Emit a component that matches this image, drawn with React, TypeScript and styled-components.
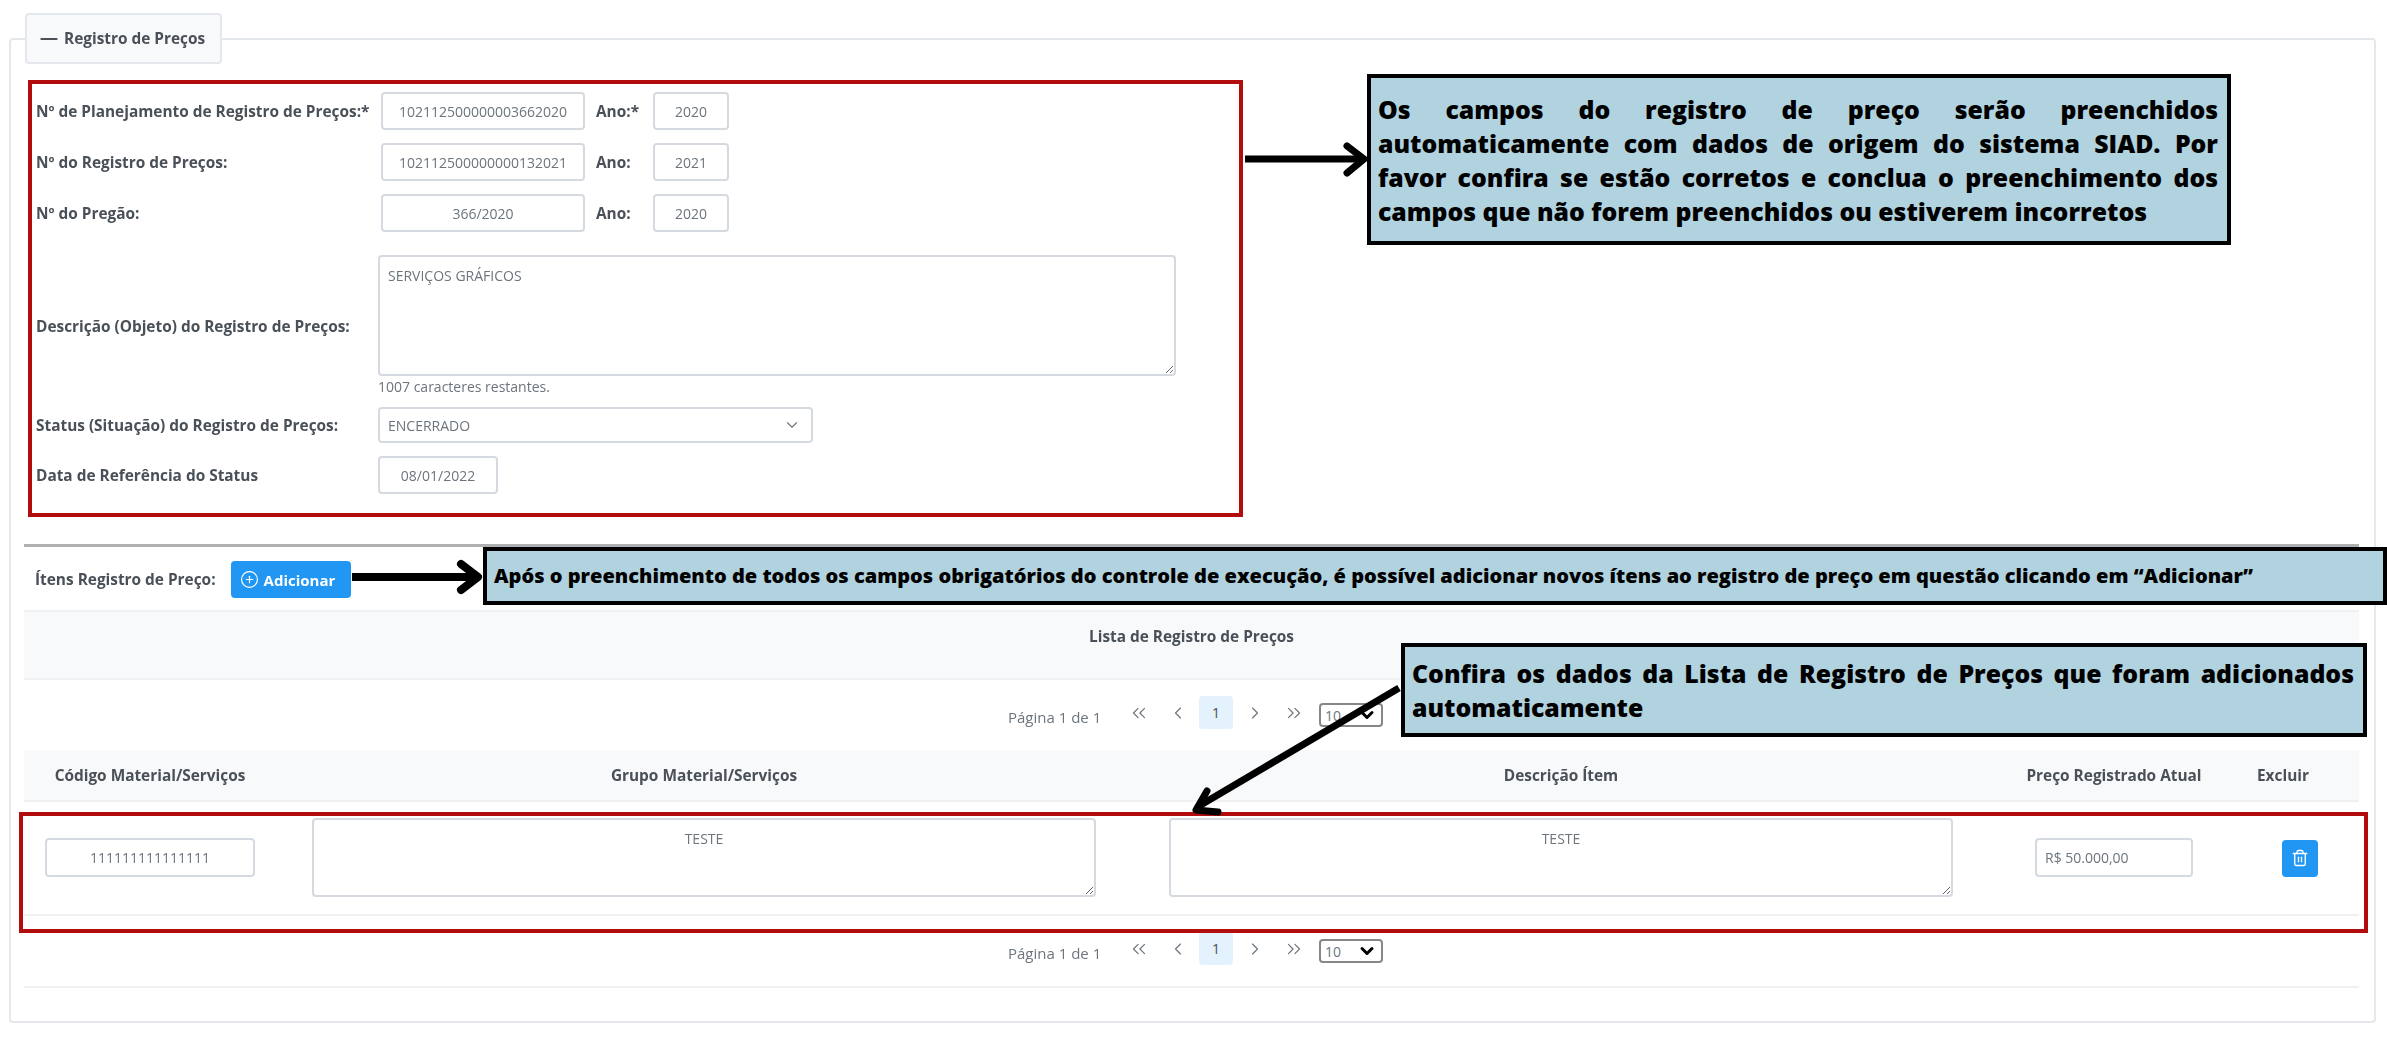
import { ChevronDown, ChevronLeft, ChevronRight, ChevronsLeft, ChevronsRight, CirclePlus, Minus, Trash2 } from "lucide-react";
import styled, { createGlobalStyle } from "styled-components";

const GlobalStyle = createGlobalStyle`
  html, body {
    margin: 0;
    padding: 0;
    background: #fff;
    overflow: hidden;
  }

  * {
    box-sizing: border-box;
  }
`;

function Paginator({ $bottom }: { $bottom?: boolean }) {
  return (
    <PaginatorBar $bottom={$bottom}>
      <PageReport>Página 1 de 1</PageReport>
      <PageIcon>
        <ChevronsLeft size={22} strokeWidth={1.3} />
      </PageIcon>
      <PageIcon>
        <ChevronLeft size={20} strokeWidth={1.4} />
      </PageIcon>
      <PageCurrent>1</PageCurrent>
      <PageIcon>
        <ChevronRight size={20} strokeWidth={1.4} />
      </PageIcon>
      <PageIcon>
        <ChevronsRight size={22} strokeWidth={1.3} />
      </PageIcon>
      <PageSize>
        10
        <ChevronDown size={20} strokeWidth={3.6} />
      </PageSize>
    </PaginatorBar>
  );
}

export default function App() {
  return (
    <Page>
      <GlobalStyle />
      <Panel>
        <Legend>
          <Minus size={26} strokeWidth={2} />
          Registro de Preços
        </Legend>

        <Form>
          <NumberRow>
            <NumberLabel>Nº de Planejamento de Registro de Preços:*</NumberLabel>
            <NumberInput readOnly defaultValue="102112500000003662020" />
            <YearLabel>Ano:*</YearLabel>
            <YearInput readOnly defaultValue="2020" />
          </NumberRow>
          <NumberRow>
            <NumberLabel>Nº do Registro de Preços:</NumberLabel>
            <NumberInput readOnly defaultValue="102112500000000132021" />
            <YearLabel>Ano:</YearLabel>
            <YearInput readOnly defaultValue="2021" />
          </NumberRow>
          <NumberRow>
            <NumberLabel>Nº do Pregão:</NumberLabel>
            <NumberInput readOnly defaultValue="366/2020" />
            <YearLabel>Ano:</YearLabel>
            <YearInput readOnly defaultValue="2020" />
          </NumberRow>

          <DescriptionRow>
            <FieldLabel>Descrição (Objeto) do Registro de Preços:</FieldLabel>
            <DescriptionField>
              <DescriptionArea readOnly defaultValue="SERVIÇOS GRÁFICOS" />
              <Remaining>1007 caracteres restantes.</Remaining>
            </DescriptionField>
          </DescriptionRow>

          <StatusRow>
            <FieldLabel>Status (Situação) do Registro de Preços:</FieldLabel>
            <Dropdown>
              ENCERRADO
              <ChevronDown size={18} strokeWidth={1.5} />
            </Dropdown>
          </StatusRow>

          <DateRow>
            <FieldLabel>Data de Referência do Status</FieldLabel>
            <DateInput readOnly defaultValue="08/01/2022" />
          </DateRow>
        </Form>

        <Divider />

        <ItemsToolbar>
          <ItemsLabel>Ítens Registro de Preço:</ItemsLabel>
          <AddButton>
            <CirclePlus size={19} strokeWidth={1.5} />
            Adicionar
          </AddButton>
        </ItemsToolbar>

        <ListTitle>Lista de Registro de Preços</ListTitle>
        <Paginator />

        <ColumnsHeader>
          <HeaderCell>Código Material/Serviços</HeaderCell>
          <HeaderCell>Grupo Material/Serviços</HeaderCell>
          <HeaderCell>Descrição Ítem</HeaderCell>
          <HeaderCell>Preço Registrado Atual</HeaderCell>
          <DeleteHeaderCell>Excluir</DeleteHeaderCell>
        </ColumnsHeader>

        <ItemRow>
          <CodeInput readOnly defaultValue="111111111111111" />
          <ItemArea readOnly defaultValue="TESTE" />
          <ItemArea readOnly defaultValue="TESTE" />
          <PriceInput readOnly defaultValue="R$ 50.000,00" />
          <DeleteButton>
            <Trash2 size={18} strokeWidth={1.8} />
          </DeleteButton>
        </ItemRow>

        <Paginator $bottom />
      </Panel>

      <Highlight $x={28} $y={80} $w={1215} $h={437} />
      <Highlight $x={19} $y={812} $w={2349} $h={121} />

      <Arrows viewBox="0 0 2387 1037">
        <path d="M1245 159H1360" strokeWidth="7" />
        <path d="M1347 146L1364 159L1347 173" strokeWidth="7" strokeLinecap="round" strokeLinejoin="round" />
        <path d="M352 577H476" strokeWidth="8" />
        <path d="M461 564L478 577L461 590" strokeWidth="8" strokeLinecap="round" strokeLinejoin="round" />
        <path d="M1399 688L1199 806" strokeWidth="7" />
        <path d="M1207 791L1196 810L1218 812" strokeWidth="7" strokeLinecap="round" strokeLinejoin="round" />
      </Arrows>

      <Callout $x={1367} $y={74} $w={864} $h={171} $size={24.8}>
        <span>
          Os campos do registro de preço serão preenchidos automaticamente com dados de origem do sistema SIAD. Por favor
          confira se estão corretos e conclua o preenchimento dos campos que não forem preenchidos ou estiverem incorretos
        </span>
      </Callout>
      <Callout $x={483} $y={547} $w={1904} $h={58} $size={20.05}>
        <span>
          Após o preenchimento de todos os campos obrigatórios do controle de execução, é possível adicionar novos ítens
          ao registro de preço em questão clicando em “Adicionar”
        </span>
      </Callout>
      <Callout $x={1401} $y={643} $w={966} $h={94} $size={24.8}>
        <span>Confira os dados da Lista de Registro de Preços que foram adicionados automaticamente</span>
      </Callout>
    </Page>
  );
}

const Page = styled.div`
  position: relative;
  width: 2387px;
  height: 1037px;
  overflow: hidden;
  padding: 38px 11px 8px 9px;
  background: #fff;
  font-family: "Open Sans", "Liberation Sans", sans-serif;
  color: #495057;
`;

const Panel = styled.section`
  height: 985px;
  padding: 0 15px 0 13px;
  border: 2px solid #e4e8ec;
  border-radius: 4px;
  filter: blur(0.45px);
`;

const Legend = styled.div`
  display: flex;
  align-items: center;
  gap: 2px;
  width: 197px;
  height: 51px;
  margin: -27px 0 0 1px;
  padding-left: 9px;
  background: #f8f9fa;
  border: 2px solid #e4e8ec;
  border-radius: 4px;
  font-size: 15.4px;
  font-weight: 700;
`;

const Form = styled.div`
  display: flex;
  flex-direction: column;
  margin-top: 28px;
  padding-left: 12px;
`;

const NumberRow = styled.div`
  display: flex;
  align-items: center;
  height: 38px;
  margin-bottom: 13px;
`;

const FieldLabel = styled.label`
  width: 342px;
  flex-shrink: 0;
  font-size: 15.4px;
  font-weight: 700;
`;

const NumberLabel = styled(FieldLabel)`
  width: 345px;
`;

const YearLabel = styled(FieldLabel)`
  width: 57px;
  margin-left: 11px;
`;

const TextInput = styled.input`
  height: 38px;
  padding: 0 8px;
  background: #fff;
  border: 2px solid #d5dae0;
  border-radius: 4px;
  outline: none;
  font-family: inherit;
  font-size: 14px;
  color: #6c757d;
  text-align: center;
`;

const NumberInput = styled(TextInput)`
  width: 204px;
`;

const YearInput = styled(TextInput)`
  width: 76px;
`;

const DescriptionRow = styled.div`
  display: flex;
  align-items: center;
  margin-top: 10px;
`;

const DescriptionField = styled.div`
  display: flex;
  flex-direction: column;
`;

const TextArea = styled.textarea`
  display: block;
  resize: both;
  padding: 9px 8px;
  background: #fff;
  border: 2px solid #d5dae0;
  border-radius: 4px;
  outline: none;
  font-family: inherit;
  font-size: 14px;
  color: #6c757d;
`;

const DescriptionArea = styled(TextArea)`
  width: 798px;
  height: 121px;
`;

const Remaining = styled.small`
  height: 20px;
  margin-top: 1px;
  font-size: 14px;
  line-height: 20px;
  color: #6c757d;
`;

const StatusRow = styled.div`
  display: flex;
  align-items: center;
  margin-top: 10px;
`;

const Dropdown = styled.div`
  display: flex;
  align-items: center;
  justify-content: space-between;
  width: 435px;
  height: 36px;
  padding: 0 10px 0 8px;
  border: 2px solid #d5dae0;
  border-radius: 4px;
  font-size: 14px;
  color: #6c757d;
`;

const DateRow = styled.div`
  display: flex;
  align-items: center;
  margin-top: 13px;
`;

const DateInput = styled(TextInput)`
  width: 120px;
`;

const Divider = styled.hr`
  height: 3px;
  margin: 50px 0 0;
  background: #aeb0b2;
  border: none;
`;

const ItemsToolbar = styled.div`
  display: flex;
  align-items: center;
  gap: 15px;
  height: 37px;
  margin-top: 14px;
  padding-left: 11px;
`;

const ItemsLabel = styled.span`
  font-size: 15.4px;
  font-weight: 700;
`;

const AddButton = styled.button`
  display: flex;
  align-items: center;
  gap: 5px;
  width: 120px;
  height: 37px;
  padding: 0 0 0 9px;
  background: #2196f3;
  border: none;
  border-radius: 4px;
  color: #fff;
  font-family: inherit;
  font-size: 15px;
  font-weight: 700;
`;

const ListTitle = styled.div`
  height: 70px;
  margin-top: 12px;
  padding-top: 14px;
  background: #f8f9fa;
  border-top: 2px solid #eef0f2;
  border-bottom: 2px solid #eef0f2;
  font-size: 15.4px;
  font-weight: 700;
  text-align: center;
`;

const PaginatorBar = styled.div<{ $bottom?: boolean }>`
  display: flex;
  align-items: center;
  justify-content: center;
  height: ${(p) => (p.$bottom ? "72px" : "70px")};
  padding-left: 8px;
  border-bottom: ${(p) => (p.$bottom ? "2px solid #eef0f2" : "none")};
`;

const PageReport = styled.span`
  width: 111px;
  padding-top: 3px;
  font-size: 15px;
  color: #6c757d;
`;

const PageIcon = styled.span`
  display: flex;
  align-items: center;
  justify-content: center;
  width: 39px;
  margin-bottom: 4px;
  color: #6c757d;
`;

const PageCurrent = styled.span`
  display: flex;
  align-items: center;
  justify-content: center;
  width: 34px;
  height: 33px;
  margin: 0 2px 5px;
  background: #e3f2fd;
  border-radius: 4px;
  font-size: 14px;
  color: #495057;
`;

const PageSize = styled.div`
  display: flex;
  align-items: center;
  justify-content: space-between;
  width: 64px;
  height: 24px;
  margin-left: 6px;
  padding: 0 4px;
  background: #fff;
  border: 2px solid #85888b;
  border-radius: 4px;
  font-size: 14px;
  color: #6c757d;

  svg {
    color: #000;
  }
`;

const ColumnsHeader = styled.div`
  display: grid;
  grid-template-columns: 252px 856px 858px 248px 121px;
  align-items: center;
  height: 52px;
  background: #f8f9fa;
  border-bottom: 2px solid #eef0f2;
`;

const HeaderCell = styled.div`
  font-size: 15.4px;
  font-weight: 700;
  text-align: center;
`;

const DeleteHeaderCell = styled(HeaderCell)`
  padding-left: 19px;
  text-align: left;
`;

const ItemRow = styled.div`
  display: grid;
  grid-template-columns: 252px 856px 858px 248px 121px;
  align-items: center;
  justify-items: center;
  padding: 16px 0 17px;
  border-bottom: 2px solid #eef0f2;
`;

const CodeInput = styled(TextInput)`
  width: 210px;
  height: 39px;
`;

const ItemArea = styled(TextArea)`
  width: 784px;
  height: 79px;
  text-align: center;
`;

const PriceInput = styled(TextInput)`
  width: 158px;
  height: 39px;
  text-align: left;
`;

const DeleteButton = styled.button`
  display: flex;
  align-items: center;
  justify-content: center;
  width: 36px;
  height: 37px;
  margin: 1px 0 0 3px;
  padding: 0;
  background: #2196f3;
  border: none;
  border-radius: 4px;
  color: #fff;
`;

const Highlight = styled.div<{ $x: number; $y: number; $w: number; $h: number }>`
  position: absolute;
  left: ${(p) => p.$x}px;
  top: ${(p) => p.$y}px;
  width: ${(p) => p.$w}px;
  height: ${(p) => p.$h}px;
  border: 4px solid #b30c0c;
`;

const Arrows = styled.svg`
  position: absolute;
  inset: 0;
  width: 2387px;
  height: 1037px;
  pointer-events: none;
  fill: none;
  stroke: #000;
`;

const Callout = styled.div<{ $x: number; $y: number; $w: number; $h: number; $size: number }>`
  position: absolute;
  left: ${(p) => p.$x}px;
  top: ${(p) => p.$y}px;
  display: flex;
  align-items: center;
  width: ${(p) => p.$w}px;
  height: ${(p) => p.$h}px;
  padding: 0 9px 0 7px;
  background: #b1d2df;
  border: 4px solid #000;
  color: #000;
  font-size: ${(p) => p.$size}px;
  font-weight: 800;
  line-height: 34px;
  text-align: justify;
`;
